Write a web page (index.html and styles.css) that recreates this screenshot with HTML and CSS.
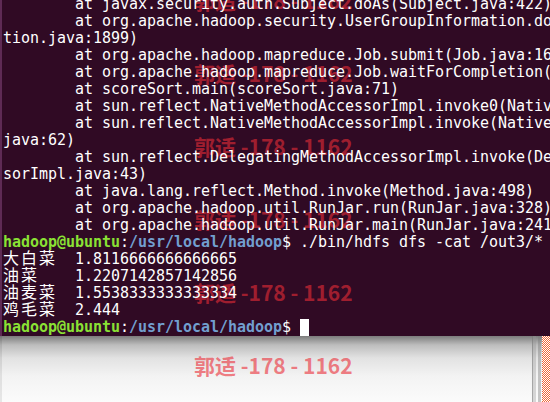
FILE: index.html
```html
<!DOCTYPE html>
<html lang="zh">
  <head>
    <meta charset="utf-8" />
    <title>hadoop@ubuntu: /usr/local/hadoop</title>
    <link rel="stylesheet" href="styles.css">
  </head>
  <body>
    <div class="screen">
      <div class="terminal">
        <div class="buffer">
          <div class="line">        at javax.security.auth.Subject.doAs(Subject.java:422)</div>
          <div class="line">        at org.apache.hadoop.security.UserGroupInformation.doAs(UserGroupInforma</div>
          <div class="line">tion.java:1899)</div>
          <div class="line">        at org.apache.hadoop.mapreduce.Job.submit(Job.java:1613)</div>
          <div class="line">        at org.apache.hadoop.mapreduce.Job.waitForCompletion(Job.java:1634)</div>
          <div class="line">        at scoreSort.main(scoreSort.java:71)</div>
          <div class="line">        at sun.reflect.NativeMethodAccessorImpl.invoke0(Native Method)</div>
          <div class="line">        at sun.reflect.NativeMethodAccessorImpl.invoke(NativeMethodAccessorImpl.</div>
          <div class="line">java:62)</div>
          <div class="line">        at sun.reflect.DelegatingMethodAccessorImpl.invoke(DelegatingMethodAcces</div>
          <div class="line">sorImpl.java:43)</div>
          <div class="line">        at java.lang.reflect.Method.invoke(Method.java:498)</div>
          <div class="line">        at org.apache.hadoop.util.RunJar.run(RunJar.java:328)</div>
          <div class="line">        at org.apache.hadoop.util.RunJar.main(RunJar.java:241)</div>
          <div class="line"><span class="user">hadoop@ubuntu</span>:<span class="path">/usr/local/hadoop</span>$ ./bin/hdfs dfs -cat /out3/*</div>
          <div class="line"><span class="cjk">大白菜</span>	1.8116666666666665</div>
          <div class="line"><span class="cjk">油菜</span>	1.2207142857142856</div>
          <div class="line"><span class="cjk">油麦菜</span>	1.5538333333333334</div>
          <div class="line"><span class="cjk">鸡毛菜</span>	2.444</div>
          <div class="line"><span class="user">hadoop@ubuntu</span>:<span class="path">/usr/local/hadoop</span>$ <span class="cursor"> </span></div>
        </div>
      </div>

      <div class="desk">
        <div class="desk-fill"></div>
        <div class="rail"></div>
        <div class="rail-thin"></div>
        <div class="checker"></div>
      </div>

      <div class="watermarks">
        <div class="mark">郭适 -178 - 1162</div>
        <div class="mark">郭适 -178 - 1162</div>
        <div class="mark">郭适 -178 - 1162</div>
        <div class="mark">郭适 -178 - 1162</div>
        <div class="mark">郭适 -178 - 1162</div>
        <div class="mark">郭适 -178 - 1162</div>
      </div>
    </div>
  </body>
</html>
```

FILE: styles.css
```css
* {
  box-sizing: border-box;
}

body {
  margin: 0;
  background: #fbfbfb;
}

.screen {
  position: relative;
  width: 550px;
  height: 402px;
  overflow: hidden;
  display: flex;
  flex-direction: column;
}

.terminal {
  height: 336px;
  flex: none;
  overflow: hidden;
  background: #300a24;
  border-left: 2px solid #5e2a54;
  padding-left: 1px;
}

.buffer {
  position: relative;
  z-index: 2;
  margin-top: -4px;
  font-family: "DejaVu Sans Mono", monospace;
  font-size: 15px;
  letter-spacing: -0.03px;
  color: #ffffff;
}

.line {
  height: 17px;
  line-height: 17px;
  white-space: pre;
  tab-size: 8;
}

.user {
  color: #8ae234;
  font-weight: bold;
}

.path {
  color: #729fcf;
  font-weight: bold;
}

.cjk {
  font-family: "Noto Sans CJK SC", sans-serif;
  font-size: 16px;
  letter-spacing: 2px;
  line-height: 0;
}

.cursor {
  display: inline-block;
  width: 9px;
  height: 17px;
  vertical-align: top;
  background: #ffffff;
}

.desk {
  flex: 1;
  display: flex;
  background: linear-gradient(#7c7c7c, #bdbdbd 9px, #e2e2e2 22px, #f3f3f3 40px, #fbfbfb);
  border-left: 2px solid rgba(0, 0, 0, 0.08);
}

.desk-fill {
  flex: 1;
}

.rail {
  width: 4px;
  margin-right: 2px;
  background: rgba(150, 150, 150, 0.35);
  border-left: 1px solid rgba(110, 110, 110, 0.45);
}

.rail-thin {
  width: 3px;
  margin-right: 1px;
  background: rgba(120, 120, 120, 0.4);
}

.checker {
  width: 8px;
  background: repeating-conic-gradient(#ef6a3a 0 25%, #ffffff 0 50%) 0 0 / 2px 2px;
}

/* watermark overlay, under the terminal text */
.watermarks {
  position: absolute;
  z-index: 1;
  top: -10px;
  left: 194px;
  display: flex;
  flex-direction: column;
  gap: 52px;
  pointer-events: none;
}

.mark {
  font-family: "Noto Sans CJK SC", sans-serif;
  font-weight: bold;
  font-size: 21px;
  line-height: 21px;
  white-space: pre;
  color: rgba(235, 45, 55, 0.6);
}
```
